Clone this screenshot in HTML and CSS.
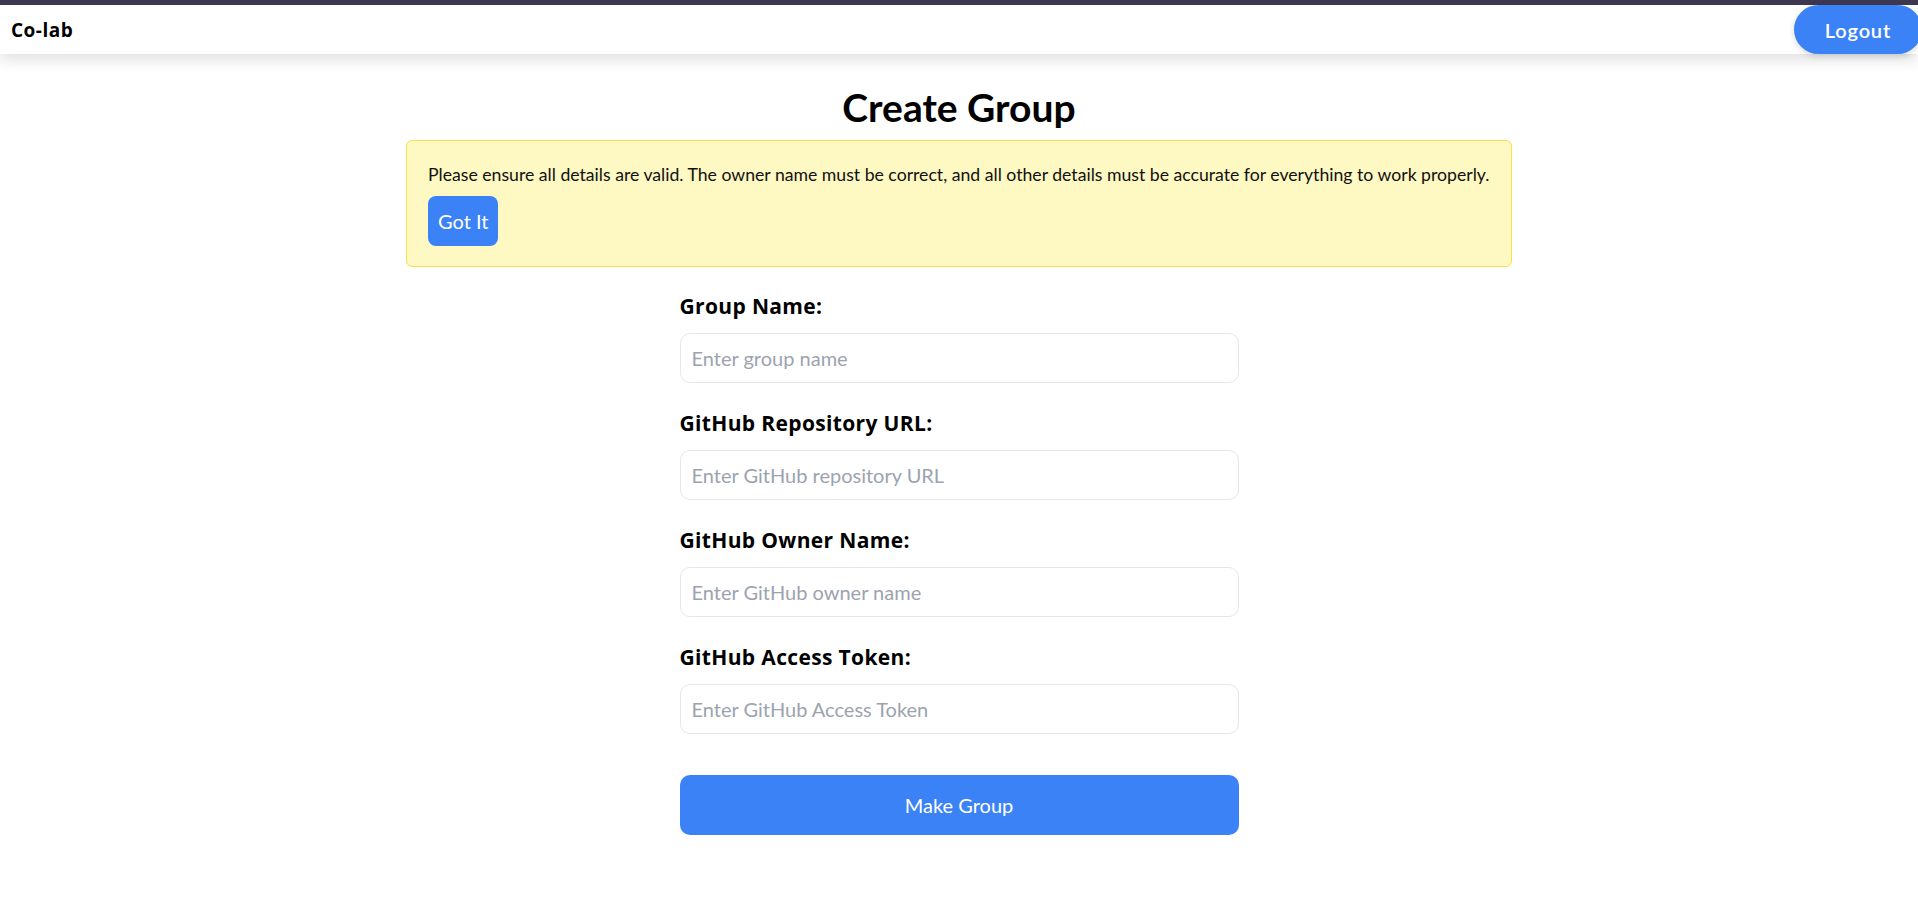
FILE: index.html
```html
<!DOCTYPE html>
<html lang="en">
<head>
<meta charset="utf-8">
<title>Co-lab - Create Group</title>
<link rel="stylesheet" href="styles.css">
</head>
<body>
<nav class="nav">
  <span class="brand">Co-lab</span>
  <button class="logout" type="button">Logout</button>
</nav>
<main class="page">
  <h1 class="title">Create Group</h1>
  <div class="notice">
    <p class="notice-text">Please ensure all details are valid. The owner name must be correct, and all other details must be accurate for everything to work properly.</p>
    <button class="notice-btn" type="button">Got It</button>
  </div>
  <form class="form">
    <div class="field">
      <label class="label" for="gname">Group Name:</label>
      <input class="input" id="gname" type="text" placeholder="Enter group name">
    </div>
    <div class="field">
      <label class="label" for="repo">GitHub Repository URL:</label>
      <input class="input" id="repo" type="text" placeholder="Enter GitHub repository URL">
    </div>
    <div class="field">
      <label class="label" for="owner">GitHub Owner Name:</label>
      <input class="input" id="owner" type="text" placeholder="Enter GitHub owner name">
    </div>
    <div class="field">
      <label class="label" for="token">GitHub Access Token:</label>
      <input class="input" id="token" type="text" placeholder="Enter GitHub Access Token">
    </div>
    <button class="submit" type="button">Make Group</button>
  </form>
</main>
</body>
</html>
```
FILE: styles.css
```css
* { box-sizing: border-box; }
html, body { margin: 0; padding: 0; }
body {
  font-family: Lato, "Noto Sans", sans-serif;
  color: #000;
  background: #fff;
  overflow-x: hidden;
}
.nav {
  display: flex;
  align-items: center;
  justify-content: space-between;
  height: 54px;
  border-top: 5px solid #3e3751;
  background: #fff;
  padding-left: 11px;
  box-shadow: 0 6px 14px rgba(0, 0, 0, 0.12);
  position: relative;
  z-index: 1;
}
.brand {
  font-family: "Open Sans", Lato, sans-serif;
  font-weight: 700;
  font-size: 19px;
  letter-spacing: 0.5px;
  line-height: 24px;
}
.logout {
  height: 49px;
  margin-right: -4px;
  padding: 0 31px 0 31px;
  border: none;
  border-radius: 25px;
  background: #3b82f6;
  color: #fff;
  font-family: inherit;
  font-size: 20px;
  font-weight: 600;
  letter-spacing: 0.8px;
  box-shadow: 0 2px 6px rgba(0, 0, 0, 0.15);
}
.page {
  max-width: 1106px;
  margin: 0 auto;
  padding-top: 30px;
}
.title {
  margin: 0 0 10px;
  text-align: center;
  font-size: 39px;
  line-height: 46px;
  font-weight: 700;
}
.notice {
  border: 1px solid #fcdf4c;
  background: #fef8c3;
  border-radius: 6px;
  padding: 20px 12px 20px 21px;
}
.notice-text {
  margin: 0 0 7px;
  font-size: 17.65px;
  line-height: 28px;
  color: #111;
}
.notice-btn {
  display: block;
  height: 50px;
  padding: 0 10px;
  border: none;
  border-radius: 8px;
  background: #3b82f6;
  color: #fff;
  font-family: inherit;
  font-size: 20px;
}
.form {
  width: 559px;
  margin: 23px auto 0;
  display: flex;
  flex-direction: column;
}
.field {
  display: flex;
  flex-direction: column;
  margin-bottom: 24px;
}
.label {
  font-family: "Open Sans", Lato, sans-serif;
  font-size: 21px;
  letter-spacing: 0.35px;
  line-height: 28px;
  font-weight: 700;
  padding-top: 2px;
  margin-bottom: 13px;
}
.input {
  height: 50px;
  padding: 0 11px;
  border: 1px solid #e5e7eb;
  border-radius: 10px;
  font-family: inherit;
  font-size: 20px;
  color: #111;
  outline: none;
}
.input::placeholder { color: #9ca3af; }
.submit {
  margin-top: 17px;
  height: 60px;
  border: none;
  border-radius: 10px;
  background: #3b82f6;
  color: #fff;
  font-family: inherit;
  font-size: 20px;
}
```
